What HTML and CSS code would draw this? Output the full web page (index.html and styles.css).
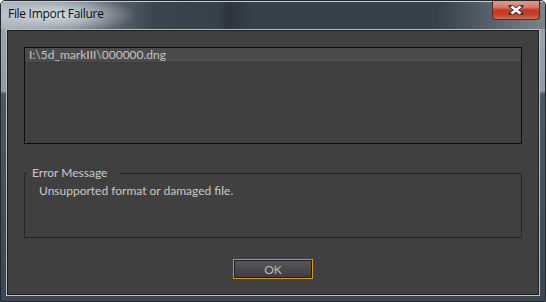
FILE: index.html
```html
<!DOCTYPE html>
<html lang="en">

<head>
    <meta charset="UTF-8">
    <meta name="viewport" content="width=device-width, initial-scale=1.0">
    <title>File Import Failure</title>
    <link rel="stylesheet" href="styles.css">
</head>

<body>
    <div class="window">
        <div class="titlebar">
            <span class="title">File Import Failure</span>
            <span class="close">
                <svg width="16" height="10" viewBox="0 0 16 10">
                    <path d="M3 1 L13 9 M13 1 L3 9" stroke="#39404a" stroke-width="4.2" stroke-linecap="square" />
                    <path d="M3.5 1.5 L12.5 8.5 M12.5 1.5 L3.5 8.5" stroke="#ffffff" stroke-width="2.4" />
                </svg>
            </span>
        </div>

        <div class="client">
            <div class="filelist">
                <div class="row">I:\5d_markIII\000000.dng</div>
            </div>

            <fieldset class="group">
                <legend>Error Message</legend>
                <p>Unsupported format or damaged file.</p>
            </fieldset>

            <div class="actions">
                <button class="btn">OK</button>
            </div>
        </div>
    </div>
</body>

</html>
```

FILE: styles.css
```css
body {
    margin: 0;
    padding: 0;
    font-family: Lato, "Open Sans", sans-serif;
    font-size: 12px;
    background: #ffffff;
}

.window {
    width: 546px;
    height: 302px;
    box-sizing: border-box;
    border: 1px solid #1f2730;
    border-radius: 5px 5px 0 0;
    background: linear-gradient(180deg, #9fa7af 0, #929ba4 30%, #4c5864 31%, #3b4652 100%);
    display: flex;
    flex-direction: column;
    overflow: hidden;
}

.titlebar {
    height: 27px;
    display: flex;
    align-items: flex-start;
    background:
        radial-gradient(ellipse 80px 18px at 55px 13px, rgba(230, 235, 240, 0.85), rgba(230, 235, 240, 0) 100%),
        linear-gradient(90deg, #a9b1b9 0, #7d8792 14%, #3a4551 28%, #36414c 40%, #2c343d 42%, #36414c 46%, #36414c 80%, #5d6873 92%, #7a838c 100%);
    border-top: 1px solid #c7cdd3;
}

.title {
    padding: 4px 0 0 7px;
    color: #0c0c0c;
    line-height: 16px;
    font-family: "Open Sans", sans-serif;
    letter-spacing: -0.3px;
}

.close {
    margin-left: auto;
    margin-right: 5px;
    margin-top: -1px;
    width: 48px;
    height: 19px;
    box-sizing: border-box;
    border: 1px solid #5a2a22;
    border-top: none;
    border-radius: 0 0 4px 4px;
    background: linear-gradient(180deg, #e09a88 0, #d67a66 35%, #c23a24 50%, #c63e28 75%, #d46a56 100%);
    display: flex;
    align-items: center;
    justify-content: center;
}

.client {
    flex: 1;
    margin: 1px 6px 6px 6px;
    border: 1px solid #1c1c1c;
    box-shadow: 0 0 0 1px #b9c1c9;
    background: #404040;
    padding: 16px 16px 0 16px;
    display: flex;
    flex-direction: column;
    color: #c8c8c8;
}

.filelist {
    height: 97px;
    box-sizing: border-box;
    border: 1px solid #0d0d0d;
    background: #404040;
}

.row {
    height: 14px;
    padding-left: 4px;
    line-height: 14px;
    background: #4b4b4b;
    border-bottom: 1px solid #3a3a3a;
    color: #c4c4c4;
}

.group {
    margin: 21px 0 0 0;
    height: 73px;
    box-sizing: border-box;
    border: 1px solid #262626;
    padding: 0 0 0 14px;
}

.group legend {
    margin-left: -12px;
    padding: 0 13px 0 5px;
    line-height: 16px;
    color: #cacaca;
}

.group p {
    margin: 2px 0 0 0;
    color: #cacaca;
}

.actions {
    display: flex;
    justify-content: center;
    margin-top: 21px;
}

.btn {
    width: 80px;
    height: 20px;
    border: 1px solid #d39a14;
    box-shadow: inset 0 0 0 1px #1e1e1e;
    background: linear-gradient(180deg, #595959 0, #4a4a4a 50%, #3c3c3c 100%);
    color: #bcbcbc;
    font-family: Lato, "Open Sans", sans-serif;
    font-size: 12px;
    padding: 0;
    line-height: 17px;
}
```
